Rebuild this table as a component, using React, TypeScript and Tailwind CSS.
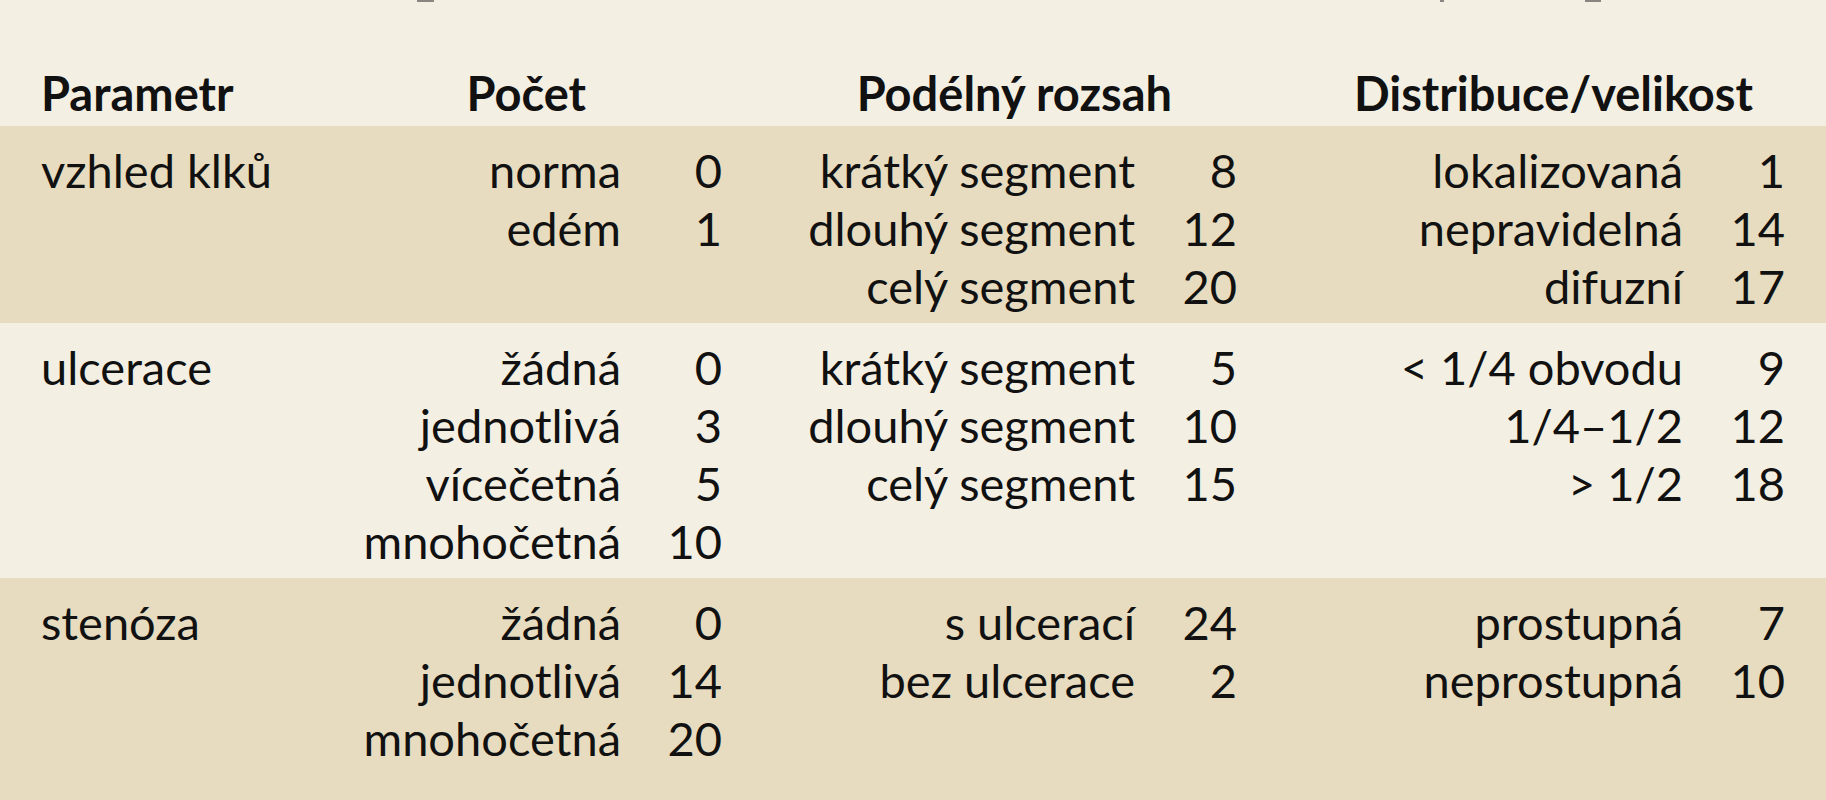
import React from "react";

type Band = {
  param: string;
  a: [string, string][];
  b: [string, string][];
  c: [string, string][];
  bg: string;
};

const bands: Band[] = [
  {
    param: "vzhled klků",
    a: [["norma", "0"], ["edém", "1"]],
    b: [["krátký segment", "8"], ["dlouhý segment", "12"], ["celý segment", "20"]],
    c: [["lokalizovaná", "1"], ["nepravidelná", "14"], ["difuzní", "17"]],
    bg: "bg-[#e7dcbf]",
  },
  {
    param: "ulcerace",
    a: [["žádná", "0"], ["jednotlivá", "3"], ["vícečetná", "5"], ["mnohočetná", "10"]],
    b: [["krátký segment", "5"], ["dlouhý segment", "10"], ["celý segment", "15"]],
    c: [["< 1/4 obvodu", "9"], ["1/4–1/2", "12"], ["> 1/2", "18"]],
    bg: "bg-[#f4efe3]",
  },
  {
    param: "stenóza",
    a: [["žádná", "0"], ["jednotlivá", "14"], ["mnohočetná", "20"]],
    b: [["s ulcerací", "24"], ["bez ulcerace", "2"]],
    c: [["prostupná", "7"], ["neprostupná", "10"]],
    bg: "bg-[#e7dcbf]",
  },
];

const cols = "grid grid-cols-[250px_371px_101px_413px_102px_446px_102px_41px]";

function BandRows({ band }: { band: Band }) {
  const n = Math.max(band.a.length, band.b.length, band.c.length);
  const rows = Array.from({ length: n }, (_, i) => i);
  return (
    <div className={`${band.bg} pt-[15px] pb-[8px] flex-none`}>
      {rows.map((i) => (
        <div key={i} className={`${cols} h-[58px] items-center`}>
          <div className="pl-[41px] whitespace-nowrap">{i === 0 ? band.param : ""}</div>
          <div className="text-right whitespace-nowrap">{band.a[i]?.[0] ?? ""}</div>
          <div className="text-right">{band.a[i]?.[1] ?? ""}</div>
          <div className="text-right whitespace-nowrap">{band.b[i]?.[0] ?? ""}</div>
          <div className="text-right">{band.b[i]?.[1] ?? ""}</div>
          <div className="text-right whitespace-nowrap">{band.c[i]?.[0] ?? ""}</div>
          <div className="text-right">{band.c[i]?.[1] ?? ""}</div>
          <div />
        </div>
      ))}
    </div>
  );
}

export default function App() {
  return (
    <div
      className="w-[1826px] h-[800px] overflow-hidden bg-[#f4efe3] text-[#111111] text-[47px] leading-[58px] flex flex-col"
      style={{ fontFamily: "Lato, 'Open Sans', sans-serif" }}
    >
      <div className="h-[2px] flex flex-none">
        <div className="ml-[417px] w-[17px] h-[2px] bg-[#8a8580]" />
        <div className="ml-[1006px] w-[4px] h-[2px] bg-[#8a8580]" />
        <div className="ml-[141px] w-[16px] h-[2px] bg-[#8a8580]" />
      </div>
      <div className="h-[124px] flex-none pt-[62px] font-bold">
        <div className={`${cols} h-[58px] items-center`}>
          <div className="pl-[41px] whitespace-nowrap">Parametr</div>
          <div className="col-span-2 text-right pr-[136px] whitespace-nowrap">Počet</div>
          <div className="col-span-2 text-right pr-[65px] whitespace-nowrap">Podélný rozsah</div>
          <div className="col-span-2 text-right pr-[32px] whitespace-nowrap">Distribuce/velikost</div>
          <div />
        </div>
      </div>
      {bands.map((b, i) => (
        <BandRows key={i} band={b} />
      ))}
      <div className="flex-1 bg-[#e7dcbf]" />
    </div>
  );
}
